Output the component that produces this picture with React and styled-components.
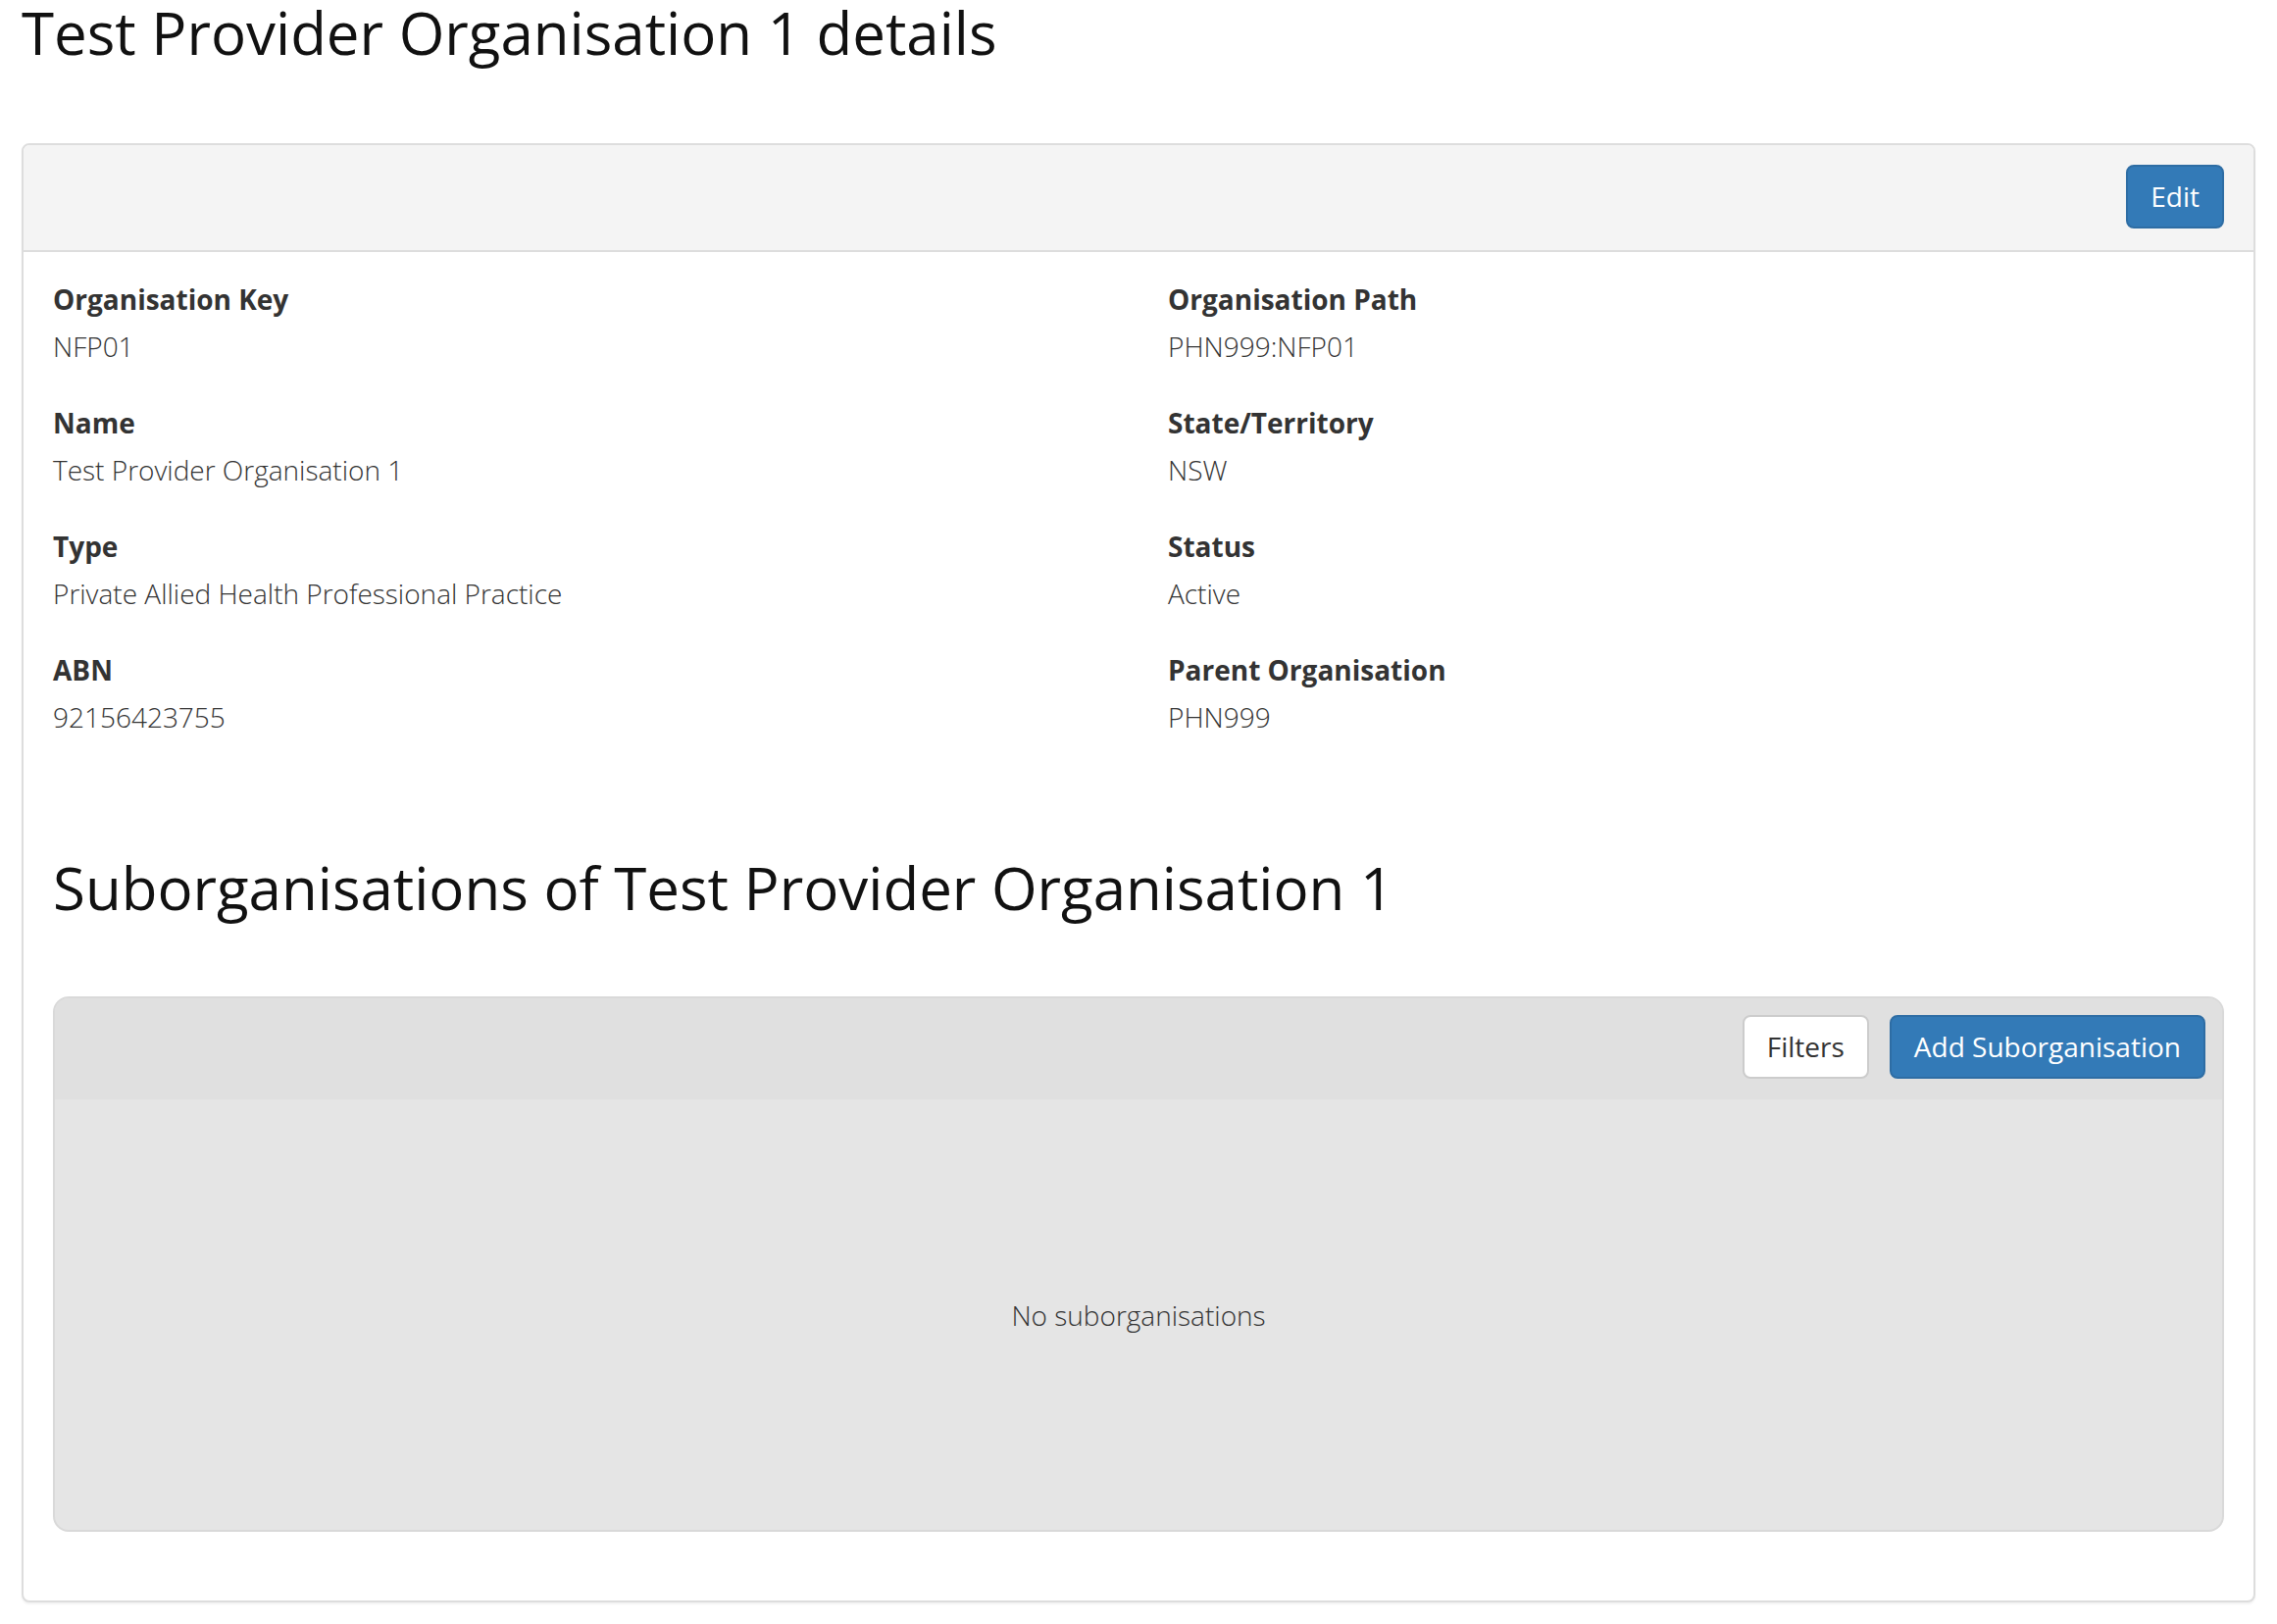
import React from "react";
import styled, { createGlobalStyle } from "styled-components";

const GlobalStyle = createGlobalStyle`
  html, body {
    margin: 0;
    padding: 0;
    background: #ffffff;
  }
  body {
    font-family: "Open Sans", "Liberation Sans", sans-serif;
    color: #333333;
  }
  * { box-sizing: border-box; }
`;

const Page = styled.div`
  padding: 0 22px 20px;
`;

const Title = styled.h1`
  margin: 0 0 80px;
  font-size: 60px;
  line-height: 66px;
  font-weight: 400;
  color: #111111;
`;

const Panel = styled.section`
  border: 2px solid #dddddd;
  border-radius: 8px;
  background: #ffffff;
  box-shadow: 0 2px 2px rgba(0, 0, 0, 0.05);
`;

const PanelHeader = styled.div`
  display: flex;
  justify-content: flex-end;
  align-items: center;
  padding: 20px 30px 22px;
  background: #f4f4f4;
  border-bottom: 2px solid #dddddd;
  border-radius: 6px 6px 0 0;
`;

const Button = styled.button`
  font-family: "Open Sans", "Liberation Sans", sans-serif;
  font-size: 28px;
  line-height: 37px;
  font-weight: 400;
  padding: 12px 23px;
  border-radius: 8px;
  border: 2px solid ${(p) => (p.$primary ? "#2e6da4" : "#cccccc")};
  background: ${(p) => (p.$primary ? "#337ab7" : "#ffffff")};
  color: ${(p) => (p.$primary ? "#ffffff" : "#333333")};
  cursor: pointer;
`;

const PanelBody = styled.div`
  padding: 24px 30px 70px;
`;

const DetailGrid = styled.dl`
  margin: 0;
  display: grid;
  grid-template-columns: 1fr 1fr;
  column-gap: 60px;
  row-gap: 30px;
`;

const Field = styled.div``;

const Label = styled.dt`
  font-size: 28px;
  line-height: 48px;
  font-weight: 700;
  color: #333333;
`;

const Value = styled.dd`
  margin: 0;
  font-size: 28px;
  line-height: 48px;
  font-weight: 300;
  color: #333333;
`;

const SubHeading = styled.h2`
  margin: 117px 0 78px;
  font-size: 60px;
  line-height: 66px;
  font-weight: 400;
  color: #111111;
`;

const ListBox = styled.div`
  border: 2px solid #d9d9d9;
  border-radius: 16px;
  overflow: hidden;
  background: #e5e5e5;
`;

const Toolbar = styled.div`
  display: flex;
  justify-content: flex-end;
  align-items: center;
  gap: 21px;
  padding: 17px 17px 21px;
  background: #e0e0e0;
`;

const EmptyState = styled.div`
  height: 439px;
  display: flex;
  align-items: center;
  justify-content: center;
  font-size: 28px;
  font-weight: 300;
  color: #333333;
`;

const fields = [
  ["Organisation Key", "NFP01"],
  ["Organisation Path", "PHN999:NFP01"],
  ["Name", "Test Provider Organisation 1"],
  ["State/Territory", "NSW"],
  ["Type", "Private Allied Health Professional Practice"],
  ["Status", "Active"],
  ["ABN", "92156423755"],
  ["Parent Organisation", "PHN999"],
];

export default function App() {
  return (
    <>
      <GlobalStyle />
      <Page>
        <Title>Test Provider Organisation 1 details</Title>
        <Panel>
          <PanelHeader>
            <Button $primary>Edit</Button>
          </PanelHeader>
          <PanelBody>
            <DetailGrid>
              {fields.map(([label, value]) => (
                <Field key={label}>
                  <Label>{label}</Label>
                  <Value>{value}</Value>
                </Field>
              ))}
            </DetailGrid>
            <SubHeading>Suborganisations of Test Provider Organisation 1</SubHeading>
            <ListBox>
              <Toolbar>
                <Button>Filters</Button>
                <Button $primary>Add Suborganisation</Button>
              </Toolbar>
              <EmptyState>No suborganisations</EmptyState>
            </ListBox>
          </PanelBody>
        </Panel>
      </Page>
    </>
  );
}
